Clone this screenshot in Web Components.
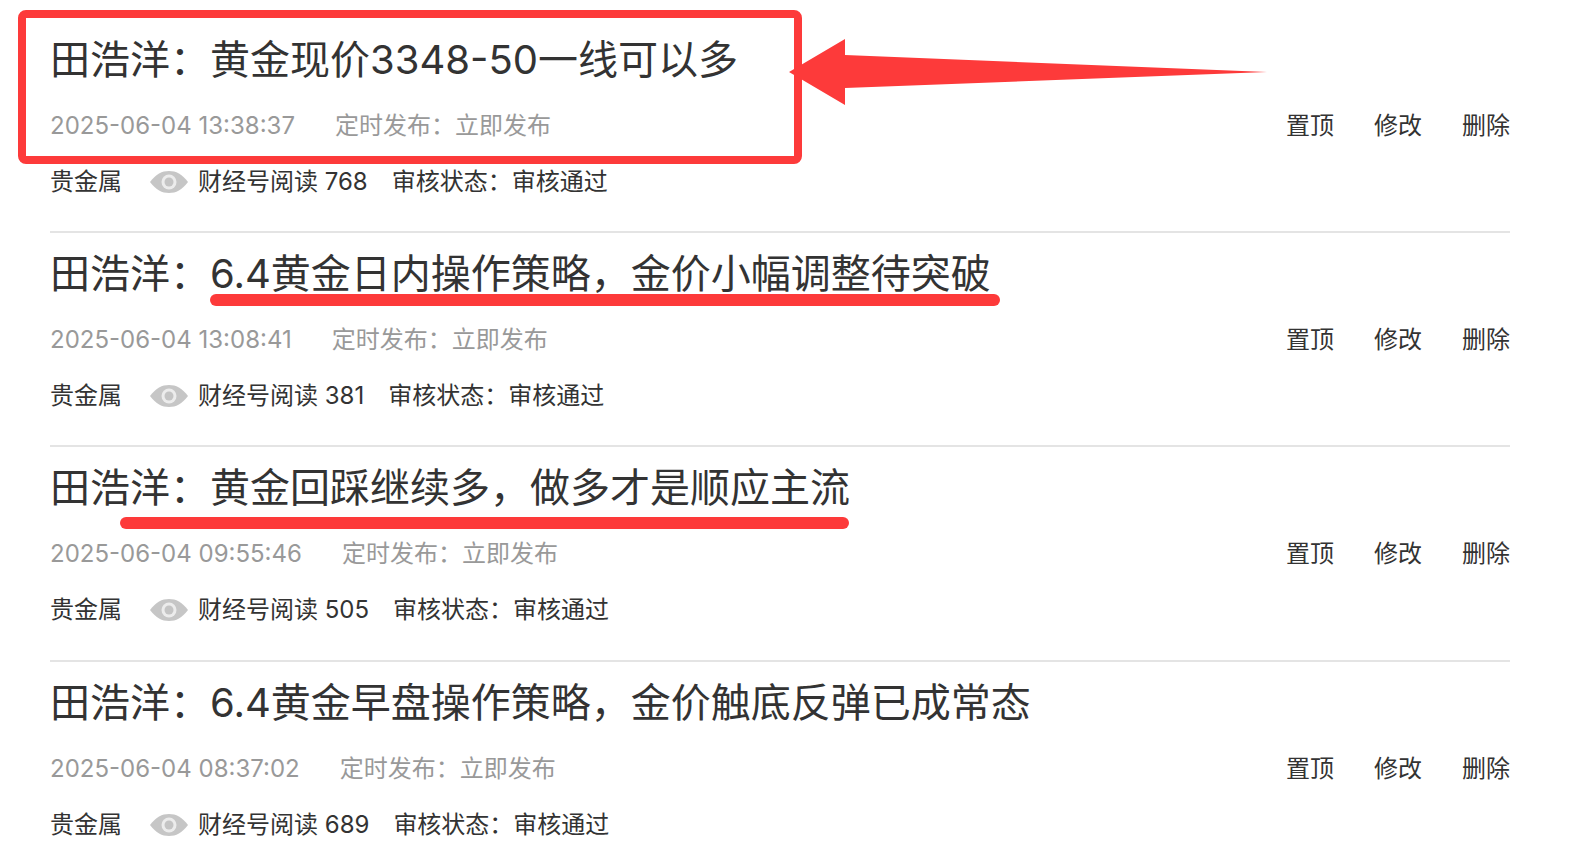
<!DOCTYPE html>
<html lang="zh-CN">
<head>
<meta charset="utf-8">
<title>文章列表</title>
<style>
  html, body { margin: 0; background: #fff; overflow: hidden; }
  body { height: 852px; position: relative; font-family: "Inter", "Noto Sans CJK SC", sans-serif; }
  article-list { padding: 19px 68px 0 50px; }
</style>
</head>
<body>
<article-list>
  <article-row heading="田浩洋&#xFF1A;黄金现价3348-50一线可以多" time="2025-06-04 13:38:37" reads="768"></article-row>
  <article-row heading="田浩洋&#xFF1A;6.4黄金日内操作策略&#xFF0C;金价小幅调整待突破" time="2025-06-04 13:08:41" reads="381"></article-row>
  <article-row heading="田浩洋&#xFF1A;黄金回踩继续多&#xFF0C;做多才是顺应主流" time="2025-06-04 09:55:46" reads="505"></article-row>
  <article-row heading="田浩洋&#xFF1A;6.4黄金早盘操作策略&#xFF0C;金价触底反弹已成常态" time="2025-06-04 08:37:02" reads="689"></article-row>
</article-list>
<mark-up></mark-up>

<script>
class ArticleList extends HTMLElement {
    constructor() {
        super();
        this.shadow = this.attachShadow({mode: 'open'});
        this.shadow.innerHTML = `
            <style>
                :host { display: block; }
            </style>
            <slot></slot>
        `;
    }
}

class ArticleRow extends HTMLElement {
    constructor() {
        super();
        this.shadow = this.attachShadow({mode: 'open'});
    }

    connectedCallback() {
        this.render();
    }

    render() {
        this.shadow.innerHTML = `
            <style>
                :host {
                    display: block;
                    height: 214.2px;
                    box-sizing: border-box;
                    padding-top: 11px;
                    border-bottom: 2px solid #e4e4e4;
                    color: #333;
                }
                :host(:last-child) { border-bottom: 0; }
                h3 {
                    margin: 0;
                    font-size: 40px;
                    font-weight: 400;
                    line-height: 60px;
                    white-space: nowrap;
                }
                .meta {
                    display: flex;
                    justify-content: space-between;
                    margin-top: 18px;
                    font-size: 24px;
                    line-height: 36px;
                }
                .when { color: #999; display: flex; gap: 40px; }
                .actions { display: flex; gap: 40px; }
                .info {
                    display: flex;
                    align-items: center;
                    margin-top: 20px;
                    font-size: 24px;
                    line-height: 36px;
                    white-space: nowrap;
                }
                .eye { width: 40px; height: 24px; margin: 0 9px 0 27px; flex: none; filter: blur(0.6px); }
                .status { margin-left: 24px; }
            </style>
            <h3>${this.getAttribute('heading')}</h3>
            <div class="meta">
                <div class="when">
                    <span>${this.getAttribute('time')}</span>
                    <span>定时发布\uFF1A立即发布</span>
                </div>
                <div class="actions"><span>置顶</span><span>修改</span><span>删除</span></div>
            </div>
            <div class="info">
                <span>贵金属</span>
                <svg class="eye" viewBox="0 0 40 24">
                    <path d="M1 12C7 4 13 1 20 1s13 3 19 11c-6 8-12 11-19 11S7 20 1 12z" fill="#c6c6c6"/>
                    <circle cx="20" cy="12" r="7.5" fill="#ececec"/>
                    <circle cx="20" cy="12" r="4.5" fill="#c4c4c4"/>
                </svg>
                <span>财经号阅读 ${this.getAttribute('reads')}</span>
                <span class="status">审核状态\uFF1A审核通过</span>
            </div>
        `;
    }
}

// red annotations drawn on top of the screenshot
class MarkUp extends HTMLElement {
    constructor() {
        super();
        this.shadow = this.attachShadow({mode: 'open'});
        this.shadow.innerHTML = `
            <style>
                :host { position: absolute; inset: 0; pointer-events: none; }
                div { position: absolute; box-sizing: border-box; }
                .box { left: 18px; top: 10px; width: 784px; height: 154px; border: 8px solid #fd3a3a; border-radius: 8px; }
                .line { background: #fd3a3a; height: 12px; border-radius: 6px; }
                .one { left: 210px; top: 294px; width: 790px; }
                .two { left: 120px; top: 517px; width: 729px; }
                svg { position: absolute; left: 0; top: 0; }
            </style>
            <div class="box"></div>
            <div class="line one"></div>
            <div class="line two"></div>
            <svg width="1578" height="852">
                <polygon points="789,72 845,39 845,55 1267,72 845,88 845,105" fill="#fd3a3a"/>
            </svg>
        `;
    }
}

customElements.define('article-list', ArticleList);
customElements.define('article-row', ArticleRow);
customElements.define('mark-up', MarkUp);
</script>
</body>
</html>
